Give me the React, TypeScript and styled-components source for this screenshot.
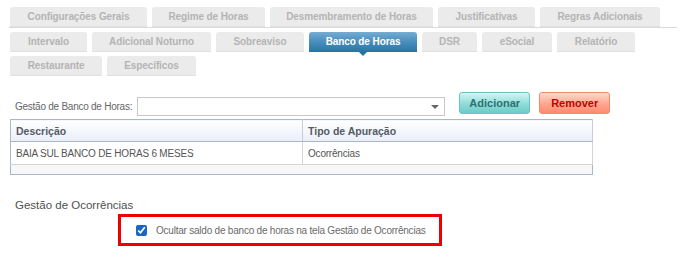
import React, { useState } from "react";
import styled, { createGlobalStyle } from "styled-components";

const GlobalStyle = createGlobalStyle`
	body {
		margin: 0;
		background: #fff;
		font-family: "Liberation Sans", Arial, sans-serif;
	}
`;

const tabRows = [
	[
		{ label: "Configurações Gerais", width: 137 },
		{ label: "Regime de Horas", width: 113 },
		{ label: "Desmembramento de Horas", width: 163 },
		{ label: "Justificativas", width: 97 },
		{ label: "Regras Adicionais", width: 120 }
	],
	[
		{ label: "Intervalo", width: 77 },
		{ label: "Adicional Noturno", width: 119 },
		{ label: "Sobreaviso", width: 88 },
		{ label: "Banco de Horas", width: 108 },
		{ label: "DSR", width: 55 },
		{ label: "eSocial", width: 70 },
		{ label: "Relatório", width: 78 }
	],
	[
		{ label: "Restaurante", width: 92 },
		{ label: "Específicos", width: 89 }
	]
];

const App = () => {
	const [active, setActive] = useState("Banco de Horas");
	const [hideBalance, setHideBalance] = useState(true);

	return (
		<>
			<GlobalStyle />
			<Page>
				<Tabs>
					{tabRows.map((row, i) => (
						<TabRow key={i} $underline={i === 0}>
							{row.map(tab => (
								<Tab
									key={tab.label}
									$width={tab.width}
									$active={tab.label === active}
									onClick={() => setActive(tab.label)}
								>
									{tab.label}
								</Tab>
							))}
						</TabRow>
					))}
				</Tabs>

				<FormRow>
					<Field>
						<Label>Gestão de Banco de Horas:</Label>
						<Select>
							<Caret />
						</Select>
					</Field>
					<Button $kind="add">Adicionar</Button>
					<Button $kind="remove">Remover</Button>
				</FormRow>

				<Table>
					<colgroup>
						<col style={{ width: 292 }} />
						<col />
					</colgroup>
					<thead>
						<tr>
							<Th>Descrição</Th>
							<Th>Tipo de Apuração</Th>
						</tr>
					</thead>
					<tbody>
						<tr>
							<Td>BAIA SUL BANCO DE HORAS 6 MESES</Td>
							<Td>Ocorrências</Td>
						</tr>
						<EmptyRow>
							<td colSpan={2} />
						</EmptyRow>
					</tbody>
				</Table>

				<SectionTitle>Gestão de Ocorrências</SectionTitle>
				<Highlight>
					<CheckLabel>
						<Check
							type="checkbox"
							checked={hideBalance}
							onChange={e => setHideBalance(e.target.checked)}
						/>
						Ocultar saldo de banco de horas na tela Gestão de Ocorrências
					</CheckLabel>
				</Highlight>
			</Page>
		</>
	);
};

const Page = styled.div`
	padding: 7px 6px 0 10px;
	width: 683px;
	box-sizing: border-box;
`;

const Tabs = styled.div`
	display: flex;
	flex-direction: column;
	gap: 4px;
`;

const TabRow = styled.div<{ $underline?: boolean }>`
	display: flex;
	gap: 5px;
	margin-left: ${p => (p.$underline ? "-1px" : "0")};
	padding-left: ${p => (p.$underline ? "1px" : "0")};
	border-bottom: ${p => (p.$underline ? "1px solid #d9d9d9" : "none")};
`;

const Tab = styled.div<{ $width: number; $active?: boolean }>`
	position: relative;
	width: ${p => p.$width}px;
	height: 20px;
	box-sizing: border-box;
	display: flex;
	align-items: center;
	justify-content: center;
	border-radius: 3px 3px 0 0;
	font-size: 10px;
	font-weight: bold;
	letter-spacing: -0.1px;
	cursor: pointer;
	color: ${p => (p.$active ? "#fff" : "#b4b4b4")};
	background: ${p =>
		p.$active
			? "linear-gradient(to bottom, #75acd2 0%, #4a8fbd 50%, #2c77a6 100%)"
			: "#ebebeb"};
	border-bottom: 1px solid ${p => (p.$active ? "#2a72a0" : "#e0e0e0")};

	&::after {
		content: "";
		display: ${p => (p.$active ? "block" : "none")};
		position: absolute;
		left: 50%;
		bottom: -5px;
		margin-left: -5px;
		border-left: 5px solid transparent;
		border-right: 5px solid transparent;
		border-top: 5px solid #2a72a0;
	}
`;

const FormRow = styled.div`
	display: flex;
	align-items: flex-start;
	margin-top: 16px;
`;

const Field = styled.div`
	display: flex;
	align-items: center;
	padding-top: 5px;
	margin-left: 5px;
`;

const Label = styled.label`
	font-size: 10px;
	letter-spacing: -0.25px;
	color: #666;
	margin-right: 5px;
`;

const Select = styled.div`
	position: relative;
	width: 308px;
	height: 19px;
	box-sizing: border-box;
	border: 1px solid #c8c8c8;
	background: #fff;
`;

const Caret = styled.span`
	position: absolute;
	right: 5px;
	top: 7px;
	border-left: 4px solid transparent;
	border-right: 4px solid transparent;
	border-top: 4px solid #666;
`;

const Button = styled.button<{ $kind: "add" | "remove" }>`
	width: 71px;
	height: 22px;
	margin-left: ${p => (p.$kind === "add" ? "14px" : "9px")};
	padding: 0;
	border-radius: 3px;
	font-family: "Liberation Sans", Arial, sans-serif;
	font-size: 11px;
	font-weight: bold;
	cursor: pointer;
	color: ${p => (p.$kind === "add" ? "#2c7170" : "#c40000")};
	border: 1px solid ${p => (p.$kind === "add" ? "#68c4c0" : "#f38a6e")};
	background: ${p =>
		p.$kind === "add"
			? "linear-gradient(to bottom, #d2f6f4 0%, #8fdcd8 55%, #6ccbc7 100%)"
			: "linear-gradient(to bottom, #ffd8cb 0%, #ffa68f 55%, #ff8a6e 100%)"};
`;

const Table = styled.table`
	margin-top: 3px;
	width: 583px;
	table-layout: fixed;
	border-collapse: collapse;
	border: 1px solid #a9b7c9;
	font-size: 10px;
	letter-spacing: -0.2px;
`;

const Th = styled.th`
	height: 21px;
	padding: 0 5px;
	text-align: left;
	font-weight: bold;
	font-size: 10.5px;
	letter-spacing: 0;
	color: #555c66;
	background: linear-gradient(to bottom, #ffffff 0%, #eaeefa 100%);
	border-right: 1px solid #c4cdd9;
	border-bottom: 1px solid #a9b7c9;
`;

const Td = styled.td`
	height: 22px;
	padding: 0 5px;
	color: #555;
	border-right: 1px solid #d5d5d5;
	border-bottom: 1px solid #d5d5d5;
`;

const EmptyRow = styled.tr`
	height: 10px;
	background: #f7f7f7;
`;

const SectionTitle = styled.div`
	margin-top: 23px;
	margin-left: 5px;
	font-size: 11.5px;
	line-height: 14px;
	color: #505050;
`;

const Highlight = styled.div`
	margin-top: 2px;
	margin-left: 108px;
	width: 324px;
	height: 32px;
	box-sizing: border-box;
	border: 3px solid #ee0000;
	display: flex;
	align-items: center;
	padding-left: 14px;
`;

const CheckLabel = styled.label`
	display: flex;
	align-items: center;
	white-space: nowrap;
	font-size: 10px;
	letter-spacing: -0.22px;
	color: #6a6a6a;
`;

const Check = styled.input`
	width: 11px;
	height: 11px;
	margin: 0 9px 0 1px;
	accent-color: #1a66c6;
`;

export default App;
